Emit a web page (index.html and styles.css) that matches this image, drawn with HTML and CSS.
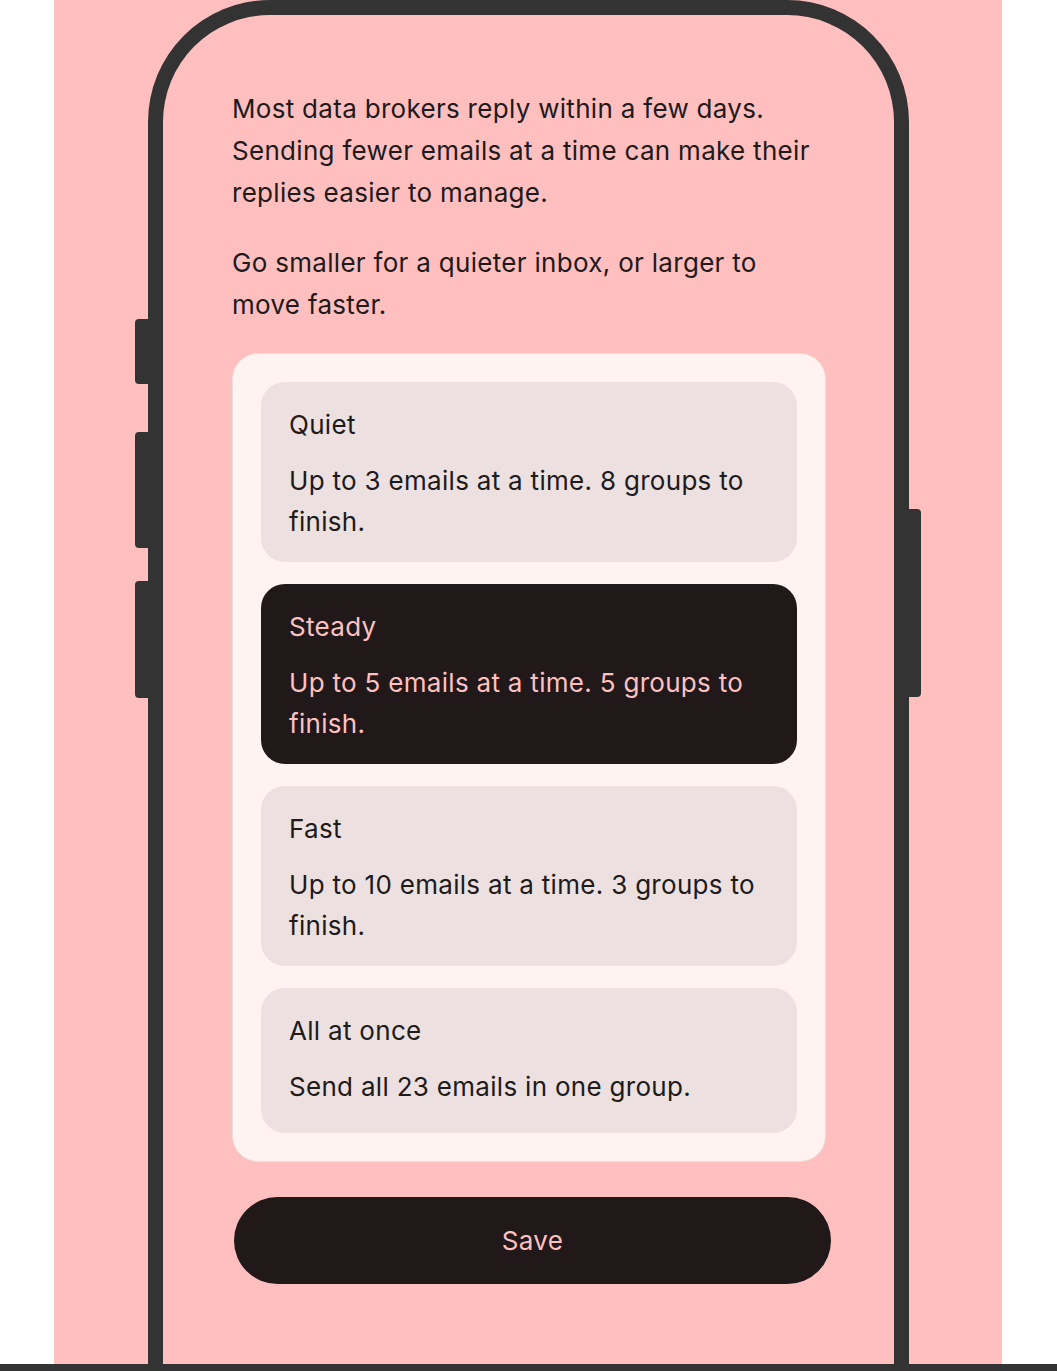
FILE: index.html
```html
<!DOCTYPE html>
<html lang="en">
<head>
<meta charset="utf-8">
<title>Sending pace</title>
<link rel="stylesheet" href="styles.css">
</head>
<body>
<div class="stage">
  <div class="phone">
    <span class="side-btn left b1"></span>
    <span class="side-btn left b2"></span>
    <span class="side-btn left b3"></span>
    <span class="side-btn right b4"></span>
    <div class="screen">
      <p class="intro">Most data brokers reply within a few days. Sending fewer emails at a time can make their replies easier to manage.</p>
      <p class="intro second">Go smaller for a quieter inbox, or larger to move faster.</p>
      <div class="options">
        <div class="option">
          <div class="opt-title">Quiet</div>
          <div class="opt-desc">Up to 3 emails at a time. 8 groups to finish.</div>
        </div>
        <div class="option selected">
          <div class="opt-title">Steady</div>
          <div class="opt-desc">Up to 5 emails at a time. 5 groups to finish.</div>
        </div>
        <div class="option">
          <div class="opt-title">Fast</div>
          <div class="opt-desc">Up to 10 emails at a time. 3 groups to finish.</div>
        </div>
        <div class="option single">
          <div class="opt-title">All at once</div>
          <div class="opt-desc">Send all 23 emails in one group.</div>
        </div>
      </div>
      <button class="save">Save</button>
    </div>
  </div>
</div>
<div class="bottom-bar"></div>
</body>
</html>
```

FILE: styles.css
```css
* { box-sizing: border-box; }
html, body {
  margin: 0;
  padding: 0;
  background: #ffffff;
}
body {
  font-family: Inter, "Noto Sans", "Liberation Sans", sans-serif;
  color: #201a1b;
  overflow: hidden;
  height: 1371px;
}
.stage {
  margin-left: 54px;
  width: 948px;
  height: 1364px;
  background: #ffbfbf;
  overflow: hidden;
}
.phone {
  position: relative;
  margin-left: 94px;
  width: 761px;
  height: 1500px;
  border: 15px solid #333333;
  border-bottom: none;
  border-radius: 122px 122px 0 0;
}
.side-btn {
  position: absolute;
  background: #333333;
}
.side-btn.left {
  left: -28px;
  width: 14px;
  border-radius: 4px 0 0 4px;
}
.side-btn.right {
  right: -27px;
  width: 13px;
  border-radius: 0 4px 4px 0;
}
.b1 { top: 304px; height: 65px; }
.b2 { top: 417px; height: 116px; }
.b3 { top: 566px; height: 117px; }
.b4 { top: 494px; height: 188px; }

.screen {
  padding: 73px 68px 0 69px;
  display: flex;
  flex-direction: column;
}
.intro {
  margin: 0;
  max-width: 585px;
  font-size: 26px;
  line-height: 42px;
  letter-spacing: 0.3px;
}
.intro.second {
  margin-top: 28px;
}
.options {
  margin-top: 27px;
  background: #fff3f2;
  border: 1px solid #ecdcdb;
  border-radius: 26px;
  padding: 28px;
  display: flex;
  flex-direction: column;
  gap: 22px;
}
.option {
  background: #ece0e0;
  border-radius: 24px;
  padding: 22px 28px 19.4px;
  font-size: 26px;
  letter-spacing: 0.3px;
  color: #201a1b;
}
.option.selected {
  background: #201819;
  color: #ffc0c0;
}
.option.single {
  padding-bottom: 25px;
}
.opt-title {
  line-height: 42px;
}
.opt-desc {
  margin-top: 15px;
  line-height: 40.8px;
}
.save {
  margin-top: 35px;
  margin-left: 2px;
  width: calc(100% + 3px);
  height: 87px;
  border: none;
  border-radius: 44px;
  background: #201819;
  color: #ffc0c0;
  font-family: Inter, "Noto Sans", "Liberation Sans", sans-serif;
  font-size: 26px;
  letter-spacing: 0.3px;
  padding: 0;
}
.bottom-bar {
  height: 7px;
  background: #333333;
}
```
